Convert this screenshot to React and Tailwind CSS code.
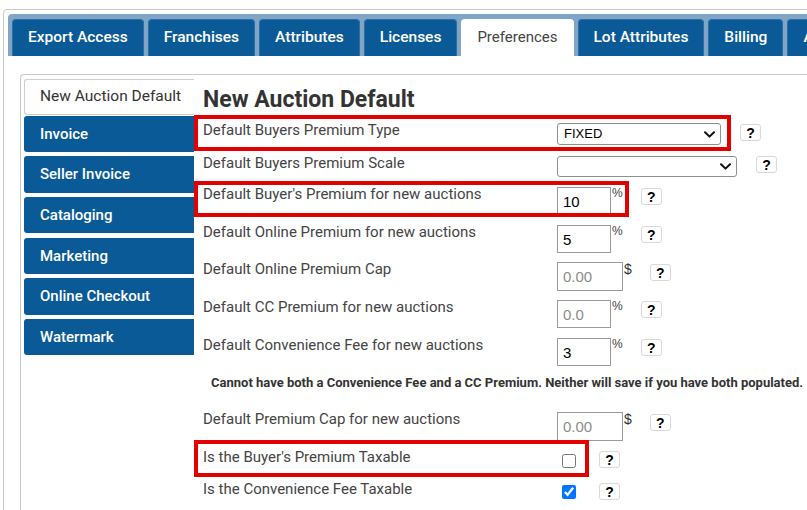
import React from "react";

const topTabs = [
  { label: "Export Access" },
  { label: "Franchises" },
  { label: "Attributes" },
  { label: "Licenses" },
  { label: "Preferences", active: true },
  { label: "Lot Attributes" },
  { label: "Billing" },
  { label: "Auctions" },
];

const sideTabs = ["Invoice", "Seller Invoice", "Cataloging", "Marketing", "Online Checkout", "Watermark"];

function Help({ className = "" }) {
  return (
    <span
      className={`flex h-[17px] w-[21px] shrink-0 items-center justify-center rounded-[3px] border border-[#d9d9d9] bg-white font-['Liberation_Sans',Arial,sans-serif] text-[14px] font-bold leading-none text-black ${className}`}
    >
      ?
    </span>
  );
}

function Select({ value, className }) {
  return (
    <div
      className={`flex items-center justify-between rounded-[3px] border border-[#8f8f8f] bg-white pl-[6px] pr-[5px] font-['Liberation_Sans',Arial,sans-serif] text-[13px] text-black ${className}`}
    >
      <span>{value}</span>
      <svg width="11" height="7" viewBox="0 0 11 7" fill="none">
        <path d="M1 1.2 L5.5 5.6 L10 1.2" stroke="#111" strokeWidth="2" strokeLinecap="round" strokeLinejoin="round" />
      </svg>
    </div>
  );
}

function TextBox({ value, placeholder, className }) {
  return (
    <input
      type="text"
      defaultValue={value}
      placeholder={placeholder}
      className={`border border-[#9a9a9a] bg-white pl-[5px] font-['Liberation_Sans',Arial,sans-serif] text-[15px] text-black outline-none placeholder:text-[#8c8c8c] ${className}`}
    />
  );
}

function Unit({ sign }) {
  return sign === "$" ? (
    <span className="ml-[1px] font-['Liberation_Sans',Arial,sans-serif] text-[14px] leading-[14px] text-[#333]">$</span>
  ) : (
    <span className="ml-[1px] font-['Liberation_Sans',Arial,sans-serif] text-[12px] leading-[12px] text-[#444]">%</span>
  );
}

function Row({ label, height, children }) {
  return (
    <div className={`flex items-start ${height}`}>
      <div className="w-[354px] shrink-0 text-[15px] leading-[14px] text-[#444]">{label}</div>
      <div className="flex items-start">{children}</div>
    </div>
  );
}

export default function App() {
  return (
    <div className="h-[510px] w-[807px] overflow-hidden bg-white font-['Roboto','Liberation_Sans',sans-serif]">
      <div className="ml-[3px] mt-[9px] h-[540px] w-[880px] rounded-[4px] border border-[#c8c8c8] p-[4px]">
        {/* Top tab strip */}
        <div className="flex h-[42px] gap-[4px] rounded-tl-[4px] bg-[#7fa6c7] pl-[4px] pt-[5px]">
          {topTabs.map((t) => (
            <div
              key={t.label}
              className={
                t.active
                  ? "flex h-[37px] shrink-0 items-center rounded-t-[4px] bg-white px-[16px] text-[15px] text-[#444]"
                  : "flex h-[37px] shrink-0 items-center rounded-t-[4px] border border-b-0 border-[#2f6ea3] bg-[#0b5a98] px-[15px] text-[15.5px] font-medium text-white"
              }
            >
              {t.label}
            </div>
          ))}
        </div>

        {/* Inner panel */}
        <div className="ml-[12px] mt-[18px] flex rounded-tl-[4px] border-l border-t border-[#c8c8c8] pl-[3px] pt-[4px]">
          <div className="flex w-[170px] shrink-0 flex-col">
            <div className="flex h-[36px] items-center rounded-l-[3px] border border-r-0 border-[#cfcfcf] bg-white pl-[15px] text-[15.5px] text-[#333]">
              New Auction Default
            </div>
            {sideTabs.map((s, i) => (
              <div
                key={s}
                className={`flex h-[36.5px] items-center rounded-l-[3px] bg-[#0b5a98] pl-[16px] text-[15px] font-medium text-white ${
                  i === 0 ? "mt-[0.5px]" : "mt-[4.2px]"
                }`}
              >
                {s}
              </div>
            ))}
          </div>

          <div className="relative flex-1 pl-[9px]">
            <div className="h-[44px] pt-[7px] text-[23px] font-bold leading-[27px] text-[#333]">New Auction Default</div>

            <Row label="Default Buyers Premium Type" height="h-[33px]">
              <Select value="FIXED" className="h-[22px] w-[164px]" />
              <Help className="ml-[19px] mt-[1px]" />
            </Row>
            <Row label="Default Buyers Premium Scale" height="h-[31px]">
              <Select value="" className="h-[21px] w-[180px]" />
              <Help className="ml-[19px]" />
            </Row>
            <Row label="Default Buyer's Premium for new auctions" height="h-[38px]">
              <TextBox value="10" className="h-[28px] w-[54px]" />
              <Unit sign="%" />
              <Help className="ml-[18px] mt-[1px]" />
            </Row>
            <Row label="Default Online Premium for new auctions" height="h-[37px]">
              <TextBox value="5" className="h-[28px] w-[54px]" />
              <Unit sign="%" />
              <Help className="ml-[18px] mt-[1px]" />
            </Row>
            <Row label="Default Online Premium Cap" height="h-[38px]">
              <TextBox placeholder="0.00" className="h-[29px] w-[66px]" />
              <Unit sign="$" />
              <Help className="ml-[18px] mt-[2px]" />
            </Row>
            <Row label="Default CC Premium for new auctions" height="h-[38px]">
              <TextBox placeholder="0.0" className="h-[28px] w-[54px]" />
              <Unit sign="%" />
              <Help className="ml-[18px] mt-[1px]" />
            </Row>
            <Row label="Default Convenience Fee for new auctions" height="h-[38px]">
              <TextBox value="3" className="h-[28px] w-[54px]" />
              <Unit sign="%" />
              <Help className="ml-[18px] mt-[1px]" />
            </Row>
            <div className="h-[36px] whitespace-nowrap pl-[8px] text-[13px] font-bold leading-[14px] text-[#333]">
              Cannot have both a Convenience Fee and a CC Premium. Neither will save if you have both populated.
            </div>
            <Row label="Default Premium Cap for new auctions" height="h-[38px]">
              <TextBox placeholder="0.00" className="h-[29px] w-[66px]" />
              <Unit sign="$" />
              <Help className="ml-[18px] mt-[2px]" />
            </Row>
            <Row label="Is the Buyer's Premium Taxable" height="h-[32px]">
              <input type="checkbox" className="ml-[5px] mt-[4px] h-[14px] w-[14px]" />
              <Help className="ml-[23px] mt-[1px]" />
            </Row>
            <Row label="Is the Convenience Fee Taxable" height="h-[32px]">
              <input type="checkbox" defaultChecked className="ml-[5px] mt-[3px] h-[14px] w-[14px]" />
              <Help className="ml-[23px] mt-[1px]" />
            </Row>

            {/* Annotation boxes */}
            <div className="pointer-events-none absolute left-0 top-[36px] h-[36px] w-[537px] border-[4px] border-[#e30000]" />
            <div className="pointer-events-none absolute left-0 top-[102px] h-[36px] w-[435px] border-[4px] border-[#e30000]" />
            <div className="pointer-events-none absolute left-0 top-[361px] h-[37px] w-[395px] border-[4px] border-[#e30000]" />
          </div>
        </div>
      </div>
    </div>
  );
}
